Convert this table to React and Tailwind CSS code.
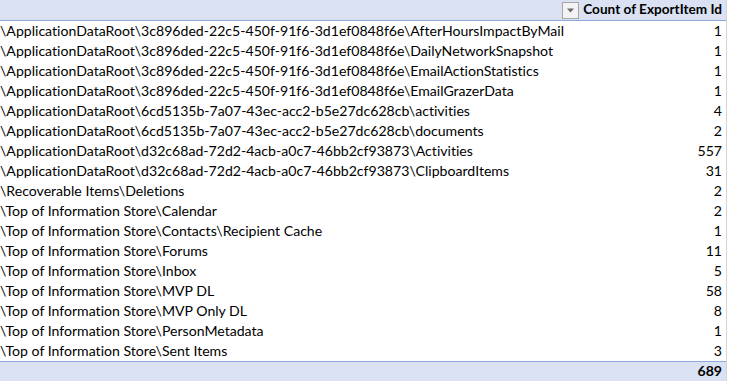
import React from "react";

const rows = [
  ["\\ApplicationDataRoot\\3c896ded-22c5-450f-91f6-3d1ef0848f6e\\AfterHoursImpactByMail", 1],
  ["\\ApplicationDataRoot\\3c896ded-22c5-450f-91f6-3d1ef0848f6e\\DailyNetworkSnapshot", 1],
  ["\\ApplicationDataRoot\\3c896ded-22c5-450f-91f6-3d1ef0848f6e\\EmailActionStatistics", 1],
  ["\\ApplicationDataRoot\\3c896ded-22c5-450f-91f6-3d1ef0848f6e\\EmailGrazerData", 1],
  ["\\ApplicationDataRoot\\6cd5135b-7a07-43ec-acc2-b5e27dc628cb\\activities", 4],
  ["\\ApplicationDataRoot\\6cd5135b-7a07-43ec-acc2-b5e27dc628cb\\documents", 2],
  ["\\ApplicationDataRoot\\d32c68ad-72d2-4acb-a0c7-46bb2cf93873\\Activities", 557],
  ["\\ApplicationDataRoot\\d32c68ad-72d2-4acb-a0c7-46bb2cf93873\\ClipboardItems", 31],
  ["\\Recoverable Items\\Deletions", 2],
  ["\\Top of Information Store\\Calendar", 2],
  ["\\Top of Information Store\\Contacts\\Recipient Cache", 1],
  ["\\Top of Information Store\\Forums", 11],
  ["\\Top of Information Store\\Inbox", 5],
  ["\\Top of Information Store\\MVP DL", 58],
  ["\\Top of Information Store\\MVP Only DL", 8],
  ["\\Top of Information Store\\PersonMetadata", 1],
  ["\\Top of Information Store\\Sent Items", 3],
];

export default function App() {
  return (
    <div
      className="w-[730px] h-[381px] bg-white overflow-hidden text-black [font-variant-ligatures:none]"
      style={{ fontFamily: "Lato, 'Liberation Sans', sans-serif" }}
    >
      <div className="w-[727px] border-r border-[#d4d4d4] h-full">
        <div className="h-[21px] bg-[#d9e1f2] border-b border-[#8ea9db] flex">
          <div className="w-[562px]" />
          <div className="flex-1 flex items-center pr-[4px]">
            <div className="w-[17px] h-[17px] border border-[#a6a6a6] bg-[#f3f3f3] flex items-center justify-center">
              <svg width="9" height="5" viewBox="0 0 9 5">
                <path d="M1 0.5 L8 0.5 L4.5 4.5 Z" fill="#6b6b6b" />
              </svg>
            </div>
            <div className="flex-1 text-right text-[13.6px] font-bold leading-none whitespace-nowrap">
              Count of ExportItem Id
            </div>
          </div>
        </div>
        {rows.map(([label, n], i) => (
          <div key={i} className="h-[20px] flex items-center text-[14.1px] leading-none">
            <div className="w-[560px] whitespace-nowrap">{label}</div>
            <div className="flex-1 text-right pr-[4px]">{n}</div>
          </div>
        ))}
        <div className="h-[20px] bg-[#d9e1f2] border-t border-[#8ea9db] flex items-center text-[14.1px] font-bold leading-none">
          <div className="flex-1" />
          <div className="pr-[4px]">689</div>
        </div>
      </div>
    </div>
  );
}
